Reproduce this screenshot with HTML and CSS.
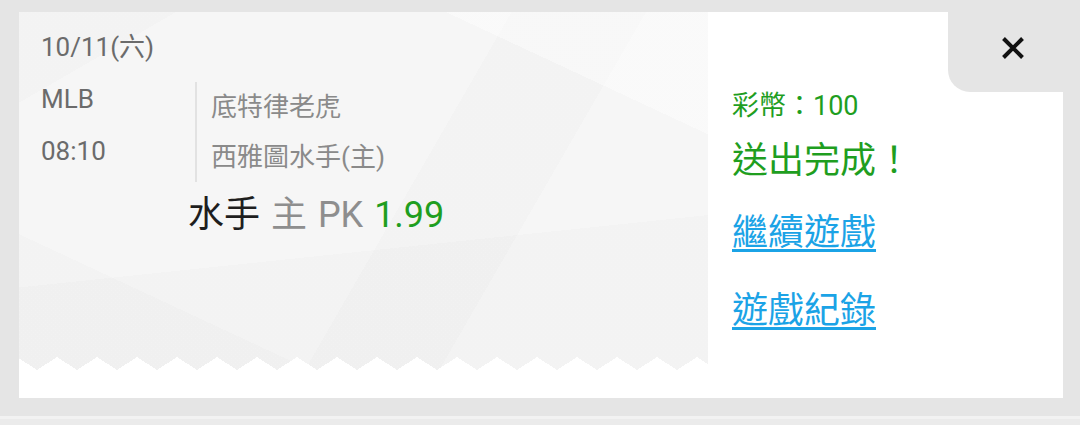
FILE: index.html
```html
<!DOCTYPE html>
<html lang="zh-Hant">
<head>
  <meta charset="UTF-8">
  <meta name="viewport" content="width=device-width, initial-scale=1.0">
  <title>投注完成</title>
  <link rel="stylesheet" href="styles.css">
</head>
<body>
  <div class="page">
    <div class="card">
      <div class="ticket">
        <div class="ticket-body">
          <div class="date">10/11(六)</div>
          <div class="match">
            <div class="meta">
              <div>MLB</div>
              <div>08:10</div>
            </div>
            <div class="teams">
              <div>底特律老虎</div>
              <div>西雅圖水手(主)</div>
            </div>
          </div>
          <div class="pick">
            <span class="pick-team">水手</span>
            <span class="pick-type">主 PK</span>
            <span class="pick-odds">1.99</span>
          </div>
        </div>
      </div>

      <div class="side">
        <div class="side-head">
          <button class="close-btn" aria-label="關閉">
            <svg width="24" height="24" viewBox="0 0 24 24">
              <path d="M2.5 2.5 L21.5 21.5 M21.5 2.5 L2.5 21.5" stroke="#111" stroke-width="4" fill="none"/>
            </svg>
          </button>
        </div>
        <div class="coins">彩幣：100</div>
        <div class="done">送出完成！</div>
        <div class="link-row"><a href="#">繼續遊戲</a></div>
        <div class="link-row second"><a href="#">遊戲紀錄</a></div>
      </div>
    </div>
    <div class="next"></div>
  </div>
</body>
</html>
```

FILE: styles.css
```css
* {
  margin: 0;
  padding: 0;
  box-sizing: border-box;
}

body {
  font-family: 'Roboto', 'Noto Sans CJK TC', sans-serif;
  background: #e5e5e5;
  width: 1080px;
  height: 425px;
  overflow: hidden;
}

.page {
  padding: 12px 17px 0 19px;
}

.card {
  display: flex;
  height: 386px;
  background: #fff;
}

/* left ticket */
.ticket {
  width: 689px;
  background: #fff;
}

.ticket-body {
  position: relative;
  height: 358px;
  padding: 9px 0 0 22px;
  background:
    linear-gradient(174deg, transparent 64%, rgba(0, 0, 0, 0.012) 64%),
    linear-gradient(205deg, transparent 80%, rgba(0, 0, 0, 0.012) 80%),
    linear-gradient(150deg, rgba(0, 0, 0, 0.012) 12%, transparent 12%),
    linear-gradient(25deg, transparent 82%, rgba(255, 255, 255, 0.4) 82%),
    linear-gradient(120deg, transparent 55%, rgba(0, 0, 0, 0.01) 55%, rgba(0, 0, 0, 0.01) 70%, transparent 70%),
    #f6f6f6;
}

/* zigzag edge */
.ticket-body::after {
  content: "";
  position: absolute;
  left: 0;
  right: 0;
  bottom: 0;
  height: 13px;
  background: conic-gradient(from 123deg at 50% 0, #fff 114deg, transparent 0) 18px 0 / 40px 13px repeat-x;
}

.date,
.meta div {
  font-size: 26px;
  line-height: 52px;
  color: #6b6b6b;
}

.match {
  display: flex;
}

.meta {
  width: 154px;
}

.teams {
  margin-top: 9px;
  height: 100px;
  padding-left: 14px;
  border-left: 2px solid #e2e2e2;
  font-size: 26px;
  line-height: 50px;
  color: #8a8a8a;
}

.pick {
  margin: 7px 0 0 147px;
  font-size: 36px;
  line-height: 52px;
  word-spacing: 2px;
}

.pick-team {
  color: #1e1e1e;
}

.pick-type {
  color: #8e8e8e;
}

.pick-odds {
  color: #1f9e1f;
}

/* right side */
.side {
  flex: 1;
  padding-left: 24px;
}

.side-head {
  display: flex;
  justify-content: flex-end;
}

.close-btn {
  width: 115px;
  height: 80px;
  border: none;
  background: #e5e5e5;
  border-bottom-left-radius: 22px;
  display: flex;
  padding: 24px 0 0 53px;
  cursor: pointer;
}

.coins {
  font-size: 27px;
  line-height: 28px;
  color: #1f9e1f;
}

.done {
  margin-top: 18px;
  font-size: 36px;
  line-height: 46px;
  color: #1f9e1f;
}

.link-row {
  margin-top: 26px;
  font-size: 36px;
  line-height: 46px;
}

.link-row.second {
  margin-top: 32px;
}

.link-row a {
  color: #1ba3e6;
  text-decoration: underline;
  text-underline-offset: 4px;
}

.next {
  margin: 18px -17px 0 -19px;
  height: 9px;
  border-top: 3px solid #f2f2f2;
  background: #ebebeb;
}
```
